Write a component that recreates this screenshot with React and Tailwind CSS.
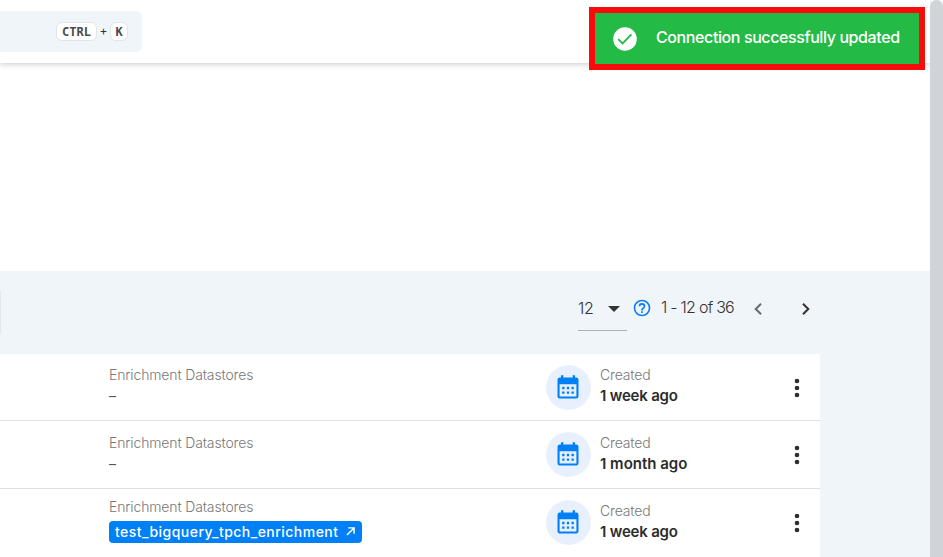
import React from 'react';

function Icon({ d, className }) {
  return (
    <svg viewBox="0 0 24 24" fill="currentColor" fillRule="evenodd" className={className}>
      <path d={d} />
    </svg>
  );
}

const CALENDAR =
  'M7 11h2v2H7zM11 11h2v2h-2zM15 11h2v2h-2zM7 15h2v2H7zM11 15h2v2h-2zM15 15h2v2h-2zM5 3h1V1h2v2h8V1h2v2h1a2 2 0 0 1 2 2v14a2 2 0 0 1-2 2H5a2 2 0 0 1-2-2V5a2 2 0 0 1 2-2zM4.8 8.8V19.2h14.4V8.8z';
const DOTS =
  'M12 16a2 2 0 1 1 0 4 2 2 0 0 1 0-4zM12 10a2 2 0 1 1 0 4 2 2 0 0 1 0-4zM12 4a2 2 0 1 1 0 4 2 2 0 0 1 0-4z';
const HELP =
  'M11 18h2v-2h-2v2m1-16A10 10 0 0 0 2 12a10 10 0 0 0 10 10 10 10 0 0 0 10-10A10 10 0 0 0 12 2m0 18c-4.41 0-8-3.59-8-8s3.59-8 8-8 8 3.59 8 8-3.59 8-8 8m0-14a4 4 0 0 0-4 4h2a2 2 0 0 1 2-2 2 2 0 0 1 2 2c0 2-3 1.75-3 5h2c0-2.25 3-2.5 3-5a4 4 0 0 0-4-4z';

const rows = [
  { created: '1 week ago', tracking: 'tracking-[-0.2px]', frame: 'h-[67px] border-b', pad: 'pt-[11px]', createdPad: 'pt-[11px]' },
  { created: '1 month ago', tracking: 'tracking-normal', frame: 'h-[68px] border-b', pad: 'pt-[12px]', createdPad: 'pt-[12px]' },
  { created: '1 week ago', tracking: 'tracking-[-0.2px]', frame: 'h-[68px]', pad: 'pt-[8px]', createdPad: 'pt-[12px]', store: 'test_bigquery_tpch_enrichment' },
];

function Key({ children, className }) {
  return (
    <kbd className={`flex h-[19px] items-center justify-center rounded-[6px] border border-[#e2e4e6] bg-white font-['DejaVu_Sans_Mono',monospace] text-[12px] leading-[18px] font-bold text-[#4a4a4a] ${className}`}>
      {children}
    </kbd>
  );
}

function Row({ row }) {
  return (
    <div className={`flex border-[#e0e0e0] bg-white ${row.frame}`}>
      <div className={`ml-[109px] w-[437px] ${row.pad}`}>
        <div className="h-[18px] text-[14px] leading-5 font-light tracking-[-0.14px] whitespace-nowrap text-[#777]">Enrichment Datastores</div>
        {row.store ? (
          <div className="mt-[6px] flex h-[22px] w-[253px] items-center justify-between rounded-[4px] bg-[#0080f6] pr-[7px] pl-[6px] text-white">
            <span className="text-[14px] leading-5 font-medium tracking-[0.47px] whitespace-nowrap">{row.store}</span>
            <svg viewBox="0 0 10 10" className="h-[9px] w-[9px] shrink-0 -translate-y-px" fill="none" stroke="currentColor" strokeWidth="1.6">
              <path d="M1 9 9 1M2.5 1H9v6.5" />
            </svg>
          </div>
        ) : (
          <div className="mt-[2px] text-[14px] leading-[22px] text-[#555]">–</div>
        )}
      </div>
      <div className="mt-[11px] flex h-[45px] w-[45px] shrink-0 items-center justify-center rounded-full bg-[#e9f0fd]">
        <Icon d={CALENDAR} className="mr-px h-[28px] w-[28px] text-[#0080f6]" />
      </div>
      <div className={`ml-[9px] w-[183px] whitespace-nowrap ${row.createdPad}`}>
        <div className="mb-px text-[14px] leading-5 font-light tracking-[-0.15px] text-[#777]">Created</div>
        <div className={`text-[15px] leading-5 font-semibold text-[#2c2c2c] ${row.tracking}`}>{row.created}</div>
      </div>
      <Icon d={DOTS} className="mt-[20px] h-[28px] w-[28px] shrink-0 text-[#2e2e2e]" />
    </div>
  );
}

export default function App() {
  return (
    <div className="relative flex h-[557px] w-[943px] overflow-hidden bg-white font-['Inter',sans-serif]">
      <div className="flex w-[930px] shrink-0 flex-col">
        <header className="h-[63px] shrink-0 bg-white pt-[11px] shadow-[0_1px_6px_rgba(0,0,0,0.22)]">
          <div className="flex h-[41px] w-[142px] items-center rounded-r-[6px] bg-[#f0f5fa] pl-[56px]">
            <Key className="w-[41px]">CTRL</Key>
            <span className="w-[13px] -translate-y-px text-center text-[12px] text-[#333]">+</span>
            <Key className="w-[18px]">K</Key>
          </div>
        </header>
        <div className="h-[208px] shrink-0" />
        <main className="h-[286px] bg-[#f0f5fa]">
          <div className="flex h-[83px] items-start text-[#333]">
            <div className="mt-[20px] h-[43px] w-px bg-[#e5e7e9]" />
            <div className="ml-[577px] flex h-[60px] w-[49px] items-start border-b border-[#aeb2b6] pt-[27px]">
              <span className="w-[16px] text-[16px] leading-5 font-light tracking-[-0.2px]">12</span>
              <svg viewBox="0 0 12 6" className="ml-[14px] mt-[8px] h-[6px] w-[12px]" fill="currentColor"><path d="M0 0h12L6 6z" /></svg>
            </div>
            <Icon d={HELP} className="ml-[5px] mt-[27px] h-[20px] w-[20px] text-[#0a7df5]" />
            <span className="ml-[9px] mt-[26px] w-[73px] text-[16px] leading-5 font-light tracking-[-0.75px] whitespace-nowrap">1 - 12 of 36</span>
            <svg viewBox="0 0 8 12" className="ml-[20px] mt-[32px] h-[12px] w-[8px] text-[#686b6e]" fill="none" stroke="currentColor" strokeWidth="2"><path d="M7 .7 1.7 6 7 11.3" /></svg>
            <svg viewBox="0 0 8 12" className="ml-[40px] mt-[32px] h-[12px] w-[8px]" fill="none" stroke="currentColor" strokeWidth="2"><path d="M1 .7 6.3 6 1 11.3" /></svg>
          </div>
          <div className="w-[820px]">
            {rows.map((row, i) => <Row key={i} row={row} />)}
          </div>
        </main>
      </div>
      <div className="w-[13px] shrink-0 bg-[#f7f8f9]">
        <div className="h-[570px] rounded-full bg-[#d0d4d9]" />
      </div>
      <div className="absolute left-[589px] top-[7px] flex h-[63px] w-[336px] items-center border-[6px] border-[#f90b0b] bg-[#24ba46] pl-[18px] text-white">
        <svg viewBox="0 0 24 24" className="h-[24px] w-[24px]">
          <circle cx="12" cy="12" r="11.8" fill="white" />
          <path d="m5.2 12.2 4.4 4.2 8.8-9.1" fill="none" stroke="#24ba46" strokeWidth="1.8" />
        </svg>
        <span className="ml-[19px] -translate-y-[2px] text-[16px] leading-5 font-medium tracking-[-0.4px] whitespace-nowrap">Connection successfully updated</span>
      </div>
    </div>
  );
}
